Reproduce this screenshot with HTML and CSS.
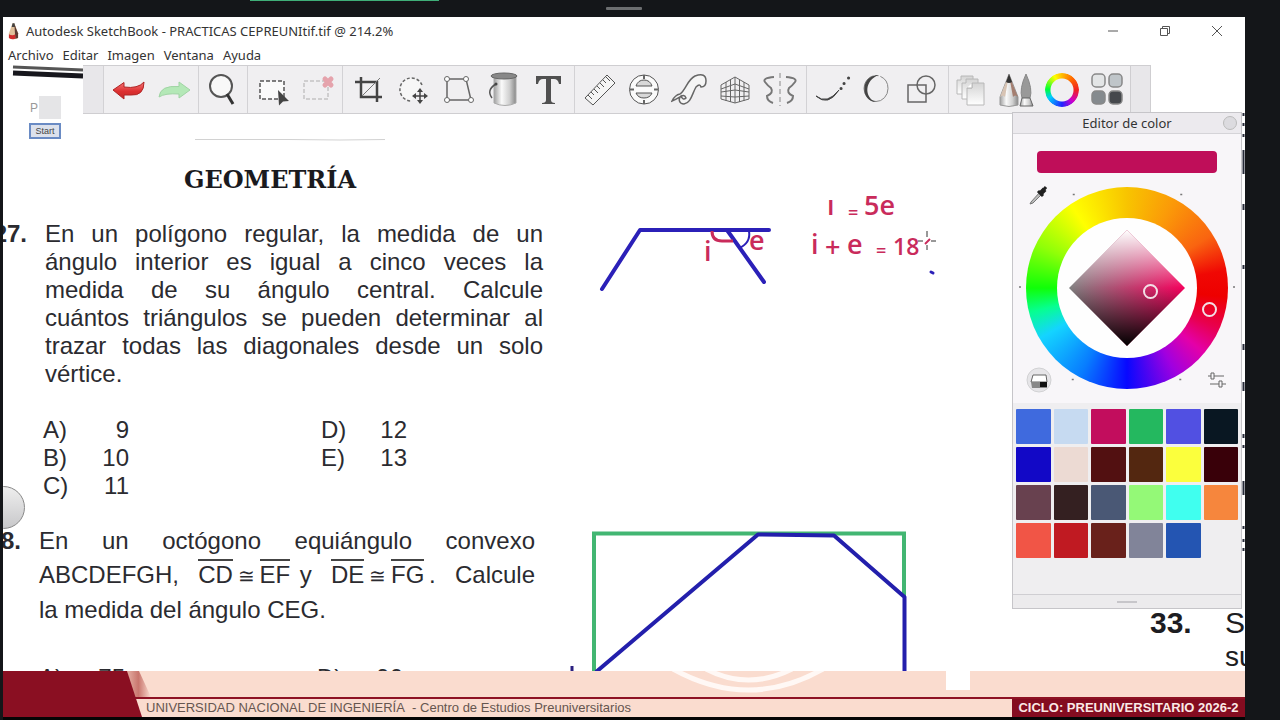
FILE: index.html
```html
<!DOCTYPE html>
<html lang="es">
<head>
<meta charset="utf-8">
<title>Autodesk SketchBook</title>
<link rel="stylesheet" href="styles.css">
</head>
<body>
<svg class="defs" width="0" height="0" aria-hidden="true">
  <defs>
    <linearGradient id="red" x1="0" y1="0" x2="0" y2="1"><stop offset="0" stop-color="#f4787a"/><stop offset=".55" stop-color="#dd2f30"/><stop offset="1" stop-color="#c22a2a"/></linearGradient>
    <linearGradient id="steel" x1="0" y1="0" x2="1" y2="0"><stop offset="0" stop-color="#a0a0a0"/><stop offset=".35" stop-color="#fafafa"/><stop offset=".7" stop-color="#d0d0d0"/><stop offset="1" stop-color="#888"/></linearGradient>
    <linearGradient id="paper" x1="0" y1="0" x2="0" y2="1"><stop offset="0" stop-color="#d4d4d4"/><stop offset="1" stop-color="#ffffff"/></linearGradient>
    <linearGradient id="hue" x1="0" y1="0" x2="1" y2="0"><stop offset="0" stop-color="#808080"/><stop offset="1" stop-color="#f5005c"/></linearGradient>
    <linearGradient id="light" x1="0" y1="0" x2="0" y2="1"><stop offset="0" stop-color="#fff"/><stop offset=".5" stop-color="#fff" stop-opacity="0"/><stop offset=".5" stop-color="#000" stop-opacity="0"/><stop offset="1" stop-color="#000"/></linearGradient>
    <linearGradient id="fold" x1="0" y1="0" x2="1" y2="0"><stop offset="0" stop-color="#efc4b8"/><stop offset=".55" stop-color="#c9766e"/><stop offset="1" stop-color="#fadccf"/></linearGradient>
  </defs>
</svg>
<header class="meeting-bar"><span class="share-line"></span><span class="grabber"></span></header>
<main class="window">
  <div class="titlebar">
    <svg class="app-icon" viewBox="0 0 12 20" aria-hidden="true"><path d="M5 1 1 12v5q5 3 10 0v-5L7 1z" fill="#e0c09a"/><path d="M5 1h2l1 4H4z" fill="#444"/><path d="M7 2l4 10v5l-3 1z" fill="#5a3a32"/><path d="M1 13q4 2 7 0v5q-4 1-7-1z" fill="#d02c2c"/></svg>
    <h1 class="title">Autodesk SketchBook - PRACTICAS CEPREUNItif.tif @ 214.2%</h1>
    <div class="window-controls">
      <button aria-label="Minimizar"><svg viewBox="0 0 12 12"><path d="M1 6h10"/></svg></button>
      <button aria-label="Restaurar"><svg viewBox="0 0 12 12"><path d="M1.500 3.500h7v7h-7zM3.500 3.500v-2h7v7h-2"/></svg></button>
      <button aria-label="Cerrar"><svg viewBox="0 0 12 12"><path d="M1 1l10 10M11 1 1 11"/></svg></button>
    </div>
  </div>
  <nav class="menu">
    <button>Archivo</button><button>Editar</button><button>Imagen</button><button>Ventana</button><button>Ayuda</button>
  </nav>
  <section class="stage">
    <article class="sheet">
      <div class="column">
        <h2 class="heading">GEOMETRÍA</h2>
        <section class="question">
          <span class="number">27.</span>
          <div class="body">
            <p class="lines"><span>En un polígono regular, la medida de un</span><span>ángulo interior es igual a cinco veces la</span><span>medida de su ángulo central. Calcule</span><span>cuántos triángulos se pueden determinar al</span><span>trazar todas las diagonales desde un solo</span><span class="last">vértice.</span></p>
            <div class="options">
              <span>A)</span><span class="value">9</span><span>D)</span><span class="value">12</span>
              <span>B)</span><span class="value">10</span><span>E)</span><span class="value">13</span>
              <span>C)</span><span class="value">11</span>
            </div>
          </div>
        </section>
        <section class="question second">
          <span class="number">28.</span>
          <div class="body">
            <p class="lines loose"><span>En un octógono equiángulo convexo</span><span>ABCDEFGH, <i>CD</i>&#8201;<b>≅</b>&#8201;<i>EF</i>&#8201;&#8201;y <i>DE</i>&#8201;<b>≅</b>&#8201;<i>FG</i>&#8201;. Calcule</span><span class="last">la medida del ángulo CEG.</span></p>
            <div class="options">
              <span>A)</span><span class="value">75</span><span>D)</span><span class="value">90</span>
            </div>
          </div>
        </section>
      </div>
      <div class="next-column"><p><strong>33.</strong><span>S</span></p><p class="under">su</p></div>
      <svg class="ink" width="1242" height="606" viewBox="3 65 1242 606">
        <path d="M13 67 83 70" stroke="#555" stroke-width="3"/><path d="M13 73 83 76" stroke="#17171d" stroke-width="5"/>
        <path d="M195 139.500H290L340 140 385 139.500" fill="none" stroke="#d2d2d2"/>
        <g fill="none" stroke="#2b20b8" stroke-width="4" stroke-linecap="round" stroke-linejoin="round">
          <path d="M602 289 640 230H769M727 230l37 52"/><path d="M749 231q2 12-10 17" stroke-width="2"/>
          <path d="M931 272l2 1" stroke-width="3"/>
        </g>
        <path d="M712 231q0 10 10 10h11" fill="none" stroke="#c92b5b" stroke-width="3"/>
        <g class="notes">
          <text x="704" y="261">i</text><text x="749" y="250">e</text>
          <text x="827" y="215">ı</text><text x="848" y="219" class="equal">=</text><text x="864" y="215">5e</text>
          <text x="811" y="254">i</text><text x="825" y="257">+</text><text x="847" y="254">e</text><text x="876" y="257" class="equal">=</text><text x="893" y="255" class="digits">18</text>
        </g>
        <path d="M925 244l5-5" stroke="#c92b5b" stroke-width="2"/>
        <path d="M927 231v6m0 8v5M918 241h5m8 0h5" stroke="#333" fill="none"/>
        <path d="M594 672V533.500H904V596" fill="none" stroke="#42b672" stroke-width="4"/>
        <path d="M596 672 758 534.500 834 535.500 904.500 597V672" fill="none" stroke="#231fac" stroke-width="4" stroke-linejoin="round"/>
        <path d="M572 666v6" stroke="#2b2080" stroke-width="3"/>
        <path d="M1243.500 113v3m0 7v3m0 8v3m0 13v24m0 30v6m0 55v4m0 75v6m0 32v9m0 43v4m0 7v3m0 33v14m0 31v3m0 10v3m0 6v3" stroke="#262a38" stroke-width="2"/>
      </svg>
    </article>

    <div class="toolbar" role="toolbar" aria-label="Herramientas">
      <span class="handle"></span>
      <div class="group two">
        <button aria-label="Deshacer"><svg viewBox="0 0 40 40"><path d="M4 20 15 12.500V17q14 2 20-5 0 14-13 13h-7v4z" fill="url(#red)" stroke="#b02424"/></svg></button>
        <button aria-label="Rehacer"><svg viewBox="0 0 40 40"><path d="M36 20 25 12v4.500Q6 15 5 27q6-4 20-3v4z" fill="#b4e8b7" stroke="#a0d4a4"/></svg></button>
      </div>
      <div class="group one">
        <button aria-label="Zoom"><svg viewBox="0 0 40 40"><circle cx="18" cy="16" r="11" fill="#f8f8f8" stroke="#555" stroke-width="2"/><path d="M24 24l6 10" stroke="#333" stroke-width="3"/></svg></button>
      </div>
      <div class="group two">
        <button aria-label="Seleccionar"><svg viewBox="0 0 40 40"><path d="M7 11h24v18H7z" fill="#fafafa" stroke="#555" stroke-width="1.500" stroke-dasharray="4 2"/><path d="M25 20l11 11-6 .500-4 4z" fill="#444"/></svg></button>
        <button aria-label="Deseleccionar"><svg viewBox="0 0 40 40"><path d="M6 11h24v18H6z" fill="none" stroke="#c4c4c4" stroke-width="1.500" stroke-dasharray="4 2"/><path d="M27 9l6 6m0-6-6 6" stroke="#e5a3ac" stroke-width="5" stroke-linecap="round"/></svg></button>
      </div>
      <div class="group five">
        <button aria-label="Recortar"><svg viewBox="0 0 40 40"><path d="M6 12h22v20M12 7v20h21" fill="none" stroke="#444" stroke-width="2.500"/><path d="M13 26 31 8" stroke="#777"/></svg></button>
        <button aria-label="Transformar"><svg viewBox="0 0 40 40"><path d="M28 15A11.500 11.500 0 1 0 17 31" fill="#f7f7f7" stroke="#666" stroke-width="1.500" stroke-dasharray="3 2"/><path d="M26 20v12M20 26h12" stroke="#444" stroke-width="1.500"/><path d="M26 18l3 4h-6zM26 34l3-4h-6zM18 26l4-3v6zM34 26l-4-3v6z" fill="#444"/></svg></button>
        <button aria-label="Distorsionar"><svg viewBox="0 0 40 40"><path d="M8 9h19l5 21H8z" fill="none" stroke="#666" stroke-width="1.500"/><g fill="#fff" stroke="#666"><circle cx="8" cy="9" r="2.500"/><circle cx="27" cy="9" r="2.500"/><circle cx="32" cy="30" r="2.500"/><circle cx="8" cy="30" r="2.500"/></g></svg></button>
        <button aria-label="Relleno"><svg viewBox="0 0 40 40"><path d="M10 6v27q11 5 22 0V6z" fill="url(#steel)" stroke="#aaa"/><ellipse cx="20" cy="6" rx="13" ry="3" fill="#888" stroke="#666"/><path d="M12 14q-10 6-4 14" fill="none" stroke="#555" stroke-width="1.500"/><circle cx="12" cy="14" r="1.500" fill="#444"/></svg></button>
        <button aria-label="Texto"><svg viewBox="0 0 40 40"><path d="M7 6h25v8h-2q-1-5-5-5h-3v21q0 3 4 3v1H13v-1q4 0 4-3V9h-3q-4 0-5 5H7z" fill="#505050"/></svg></button>
      </div>
      <div class="group five">
        <button aria-label="Regla"><svg viewBox="0 0 40 40"><path d="M4 28 26 5l8 8-22 22z" fill="#f5f5f5" stroke="#555"/><path d="M7 25l4 4m-1-7 3 3m0-6 4 4m-1-7 3 3m0-6 4 4m-1-7 3 3m0-6 4 4" stroke="#555"/></svg></button>
        <button aria-label="Elipse"><svg viewBox="0 0 40 40"><circle cx="18" cy="19.500" r="14.500" fill="#fafafa" stroke="#555"/><path d="M10 16q2-6 8-6t8 6zM10 23q2 5 8 5t8-5z" fill="#d8d8d8" stroke="#555"/><path d="M18 5v4m0 21v4M4 19.500h4m20 0h4" stroke="#666" stroke-width="2"/></svg></button>
        <button aria-label="Curva francesa"><svg viewBox="0 0 40 40"><path d="M1 31Q4 25 9 24C15 20 16 10 24 6Q35 2 35 11q0 6-5 6-1-4-5 0c-4 7-5 16-12 17-5 0-6-5-3-8 1 3 3 4 5 2-2-6-6 0-14 3z" fill="#f5f5f5" stroke="#666" stroke-width="1.500"/></svg></button>
        <button aria-label="Perspectiva"><svg viewBox="0 0 40 40"><path d="M5 15 19 7l14 8v14l-14 4-14-4zM19 7v26M10 12v19M14.500 10v22M28 12v19M23.500 10v22M5 19l14-5 14 5M5 22l14-2 14 2M5 26l14 1 14-1" fill="none" stroke="#666"/></svg></button>
        <button aria-label="Simetría"><svg viewBox="0 0 40 40"><path d="M13 7Q1 8 4 12t6 6q3 5-4 8 0 5 6 7M25 7q12 1 9 5t-6 6q-3 5 4 8 0 5-6 7" fill="none" stroke="#777" stroke-width="2"/><path d="M19 3v33" stroke="#888" stroke-dasharray="5 3"/></svg></button>
      </div>
      <div class="group three">
        <button aria-label="Trazo predictivo"><svg viewBox="0 0 40 40"><path d="M3 26q11 9 23-6-11 17-23 6z" fill="#444" stroke="#444"/><path d="M28 18.500h.1M31 13.500h.1M35.500 8h.1" stroke="#444" stroke-width="3" stroke-linecap="round"/></svg></button>
        <button aria-label="Trazo de elipse"><svg viewBox="0 0 40 40"><ellipse cx="18" cy="18.500" rx="12" ry="13" fill="none" stroke="#888" stroke-dasharray="56 2 3 2"/><path d="M21 5C1 5 3 32 18 32 6 28 6 10 21 5z" fill="#444"/></svg></button>
        <button aria-label="Formas"><svg viewBox="0 0 40 40"><path d="M5 15h18v17H5z" fill="none" stroke="#666" stroke-width="1.500"/><circle cx="23" cy="15" r="9" fill="none" stroke="#666" stroke-width="1.500"/></svg></button>
      </div>
      <div class="group four">
        <button aria-label="Capas"><svg viewBox="0 0 40 40"><g fill="url(#paper)" stroke="#b8b8b8"><path d="M9 6h12v18H5V10h4z"/><path d="M14 9h12v20H10V13h4z"/><path d="M20 13h12v22H15V18h5z"/><path d="M15 18h5v-5" fill="#fff"/></g></svg></button>
        <button aria-label="Pinceles"><svg viewBox="0 0 40 40"><path d="M12 4 3 27v8q9 3 18 0v-8z" fill="url(#steel)" stroke="#999"/><path d="M12 5 7 17 3 27q3-3 5 0z" fill="#d8c4b4"/><path d="M12 5l4 10 5 12q-3-3-5 0z" fill="#a57e70"/><path d="M12 4l-3 8q3 2 6 0z" fill="#333"/><path d="M29 4q-7 15-4 24h8q3-9-4-24z" fill="#999" stroke="#888"/><path d="M25 28h8l3 8H23z" fill="url(#steel)" stroke="#666"/></svg></button>
        <button aria-label="Editor de color"><span class="mini-wheel"></span></button>
        <button aria-label="Biblioteca de colores"><svg viewBox="0 0 40 40"><g stroke="#888" stroke-width="1.500"><rect x="5" y="4" width="13" height="13" rx="4" fill="#e3e5e6"/><rect x="22" y="4" width="13" height="13" rx="4" fill="#bfc5c9"/><rect x="5" y="21" width="13" height="13" rx="4" fill="#858a8e"/><rect x="22" y="21" width="13" height="13" rx="4" fill="#45484c"/></g></svg></button>
      </div>
      <span class="handle end"></span>
    </div>

    <div class="launcher"><span class="letter">P</span><span class="thumb"></span><button class="start">Start</button></div>
    <button class="puck" aria-label="Controlador de pincel"></button>

    <aside class="panel">
      <header class="panel-head"><h2>Editor de color</h2><button class="close" aria-label="Cerrar panel"></button></header>
      <div class="picker">
        <div class="current"></div>
        <div class="wheel-area">
          <div class="wheel">
            <div class="hole"><svg class="diamond" viewBox="0 0 116 116"><path d="M58 0l58 58-58 58L0 58z" fill="url(#hue)"/><path d="M58 0l58 58-58 58L0 58z" fill="url(#light)"/></svg></div>
            <span class="ring hue-ring"></span><span class="ring tone-ring"></span>
          </div>
          <svg class="ticks" viewBox="0 0 229 230"><path d="M60 21h2M168 21h2M6 114h2M221 114h2M59 207h2M167 207h2" stroke="#777" stroke-width="1.500"/></svg>
          <button class="tool dropper" aria-label="Cuentagotas"><svg viewBox="0 0 24 24"><path d="M4 20 13 10l2 2-9 9-3 1z" fill="#bbb" stroke="#777"/><path d="M11 9l5 5M14 11l5-6" stroke="#222" stroke-width="3"/><path d="M13 10l3-3 2 2-3 3z" fill="#222" stroke="#222" stroke-width="2"/></svg></button>
          <button class="tool mode" aria-label="Transparencia"><svg viewBox="0 0 26 26"><circle cx="13" cy="13" r="12" fill="#e6e5e8" stroke="#d2d2d4"/><path d="M7 8h13l1 7H5z" fill="#fff" stroke="#666"/><path d="M5 15h16v6H6z" fill="#888"/><path d="M14 15h7v5h-7z" fill="#111"/></svg></button>
          <button class="tool adjust" aria-label="Ajustes"><svg viewBox="0 0 20 20"><path d="M1 6h3m3 0h10M3 14h9m3 0h4M4 3h3v6H4zM12 11h3v6h-3z" fill="none" stroke="#666"/></svg></button>
        </div>
      </div>
      <div class="swatches">
        <button class="c1" aria-label="Azul"></button><button class="c2" aria-label="Celeste"></button><button class="c3" aria-label="Magenta"></button><button class="c4" aria-label="Verde"></button><button class="c5" aria-label="Violeta"></button><button class="c6" aria-label="Noche"></button>
        <button class="c7" aria-label="Azul intenso"></button><button class="c8" aria-label="Rosa pálido"></button><button class="c9" aria-label="Granate"></button><button class="c10" aria-label="Marrón"></button><button class="c11" aria-label="Amarillo"></button><button class="c12" aria-label="Vino"></button>
        <button class="c13" aria-label="Malva"></button><button class="c14" aria-label="Café"></button><button class="c15" aria-label="Pizarra"></button><button class="c16" aria-label="Verde claro"></button><button class="c17" aria-label="Turquesa"></button><button class="c18" aria-label="Naranja"></button>
        <button class="c19" aria-label="Coral"></button><button class="c20" aria-label="Rojo"></button><button class="c21" aria-label="Teja"></button><button class="c22" aria-label="Gris"></button><button class="c23" aria-label="Azul medio"></button>
      </div>
      <div class="panel-grip"><span></span></div>
    </aside>
  </section>
  <footer class="banner">
    <svg class="emblem" viewBox="570 671 420 26" width="420" height="26" aria-hidden="true"><path d="M673 669q76 42 150 0M706 669q42 22 86 0" fill="none" stroke="#fff8f5" stroke-width="5"/><path d="M946 671h24v19h-24z" fill="#fff"/></svg>
    <div class="strip"><p class="school">UNIVERSIDAD NACIONAL DE INGENIERÍA&nbsp; - Centro de Estudios Preuniversitarios</p><p class="cycle">CICLO: PREUNIVERSITARIO 2026-2</p></div>
    <svg class="corner" viewBox="0 0 156 46" width="156" height="46" aria-hidden="true"><path d="M120 0h16l12 26h-18z" fill="url(#fold)"/><path d="M0 0h115l18 46H0z" fill="#8a0f22" transform="translate(0 0)"/><path d="M0 0h124l15 46H0z" fill="#8a0f22"/></svg>
  </footer>
</main>
</body>
</html>
```
FILE: styles.css
```css
* { box-sizing: border-box; }
body {
  margin: 0;
  height: 100vh;
  display: flex;
  flex-direction: column;
  overflow: hidden;
  background: #141619;
  font-family: "Open Sans", "Noto Sans", sans-serif;
  color: #333;
}
button { padding: 0; border: 0; background: none; font: inherit; color: inherit; }
h1, h2, p { margin: 0; font-weight: normal; }
svg { display: block; }
.defs { position: absolute; }

.meeting-bar { height: 17px; flex: none; position: relative; display: flex; justify-content: center; align-items: center; }
.share-line { position: absolute; top: 0; left: 250px; width: 189px; height: 1px; background: #3fae78; }
.grabber { width: 36px; height: 3px; margin-right: 32px; border-radius: 1px; background: #6c6e70; }

.window { flex: 1; min-height: 0; margin: 0 35px 0 3px; display: flex; flex-direction: column; background: #fff; border-bottom: 3px solid #050505; }
.titlebar { flex: none; height: 28px; display: flex; align-items: center; padding-left: 5px; gap: 7px; }
.app-icon { width: 11px; height: 19px; }
.title { flex: 1; font-family: "Noto Sans", sans-serif; font-size: 13px; line-height: 18px; }
.window-controls { display: flex; padding-right: 2px; }
.window-controls button { width: 52px; height: 26px; display: grid; place-items: center; }
.window-controls svg { width: 12px; height: 12px; fill: none; stroke: #555; }
.menu { flex: none; height: 20px; display: flex; align-items: center; gap: 9px; padding-left: 5px; }
.menu button { font-family: "Noto Sans", sans-serif; font-size: 13px; line-height: 18px; }

.stage { flex: 1; min-height: 0; position: relative; overflow: hidden; }
.sheet { position: relative; display: flex; justify-content: space-between; height: 100%; overflow: hidden; font-family: "Liberation Sans", Arial, sans-serif; font-size: 24px; line-height: 28px; color: #2b2b30; }
.column { width: 540px; padding-top: 99px; }
.heading { margin: 0 6px 24px 0; font-family: "DejaVu Serif", serif; font-weight: bold; font-size: 24px; line-height: 32px; text-align: center; color: #1a1a1e; }
.question { display: flex; gap: 18px; }
.number { flex: none; width: 24px; display: flex; justify-content: flex-end; font-weight: bold; }
.body { flex: 1; }
.second { margin: 24px 8px 0 0; }
.second .number { width: 18px; line-height: 34px; }
.lines span { display: block; text-align: justify; text-align-last: justify; white-space: nowrap; }
.lines .last { text-align-last: left; }
.loose { line-height: 34px; }
.loose i { font-style: normal; border-top: 2px solid #444; }
.loose b { font-weight: normal; font-size: 20px; }
.options { display: grid; grid-template-columns: 46px 232px 46px 40px; justify-content: start; margin: 28px 0 0 -2px; }
.value { width: 40px; text-align: right; }
.second .options { margin: 37px 0 0; }
.next-column { width: 95px; align-self: flex-end; font-size: 30px; line-height: 34px; color: #1d1d22; white-space: nowrap; }
.next-column p { display: flex; justify-content: space-between; }
.next-column span { width: 20px; }
.next-column .under { height: 31px; padding-left: 75px; font-size: 28px; }
.ink { position: absolute; top: 0; left: 0; }
.notes { font-family: "Open Sans", sans-serif; font-size: 27px; font-weight: 600; fill: #c92b5b; }
.notes .equal { font-size: 18px; }
.notes .digits { font-size: 23px; }

.toolbar { position: absolute; top: 0; left: 80px; height: 49px; display: flex; background: #f0eff1; border: 1px solid #cfced1; border-left: 0; }
.handle { width: 20px; background: #e8e7ea; }
.handle.end { border-left: 1px solid #cfced1; }
.group { display: flex; justify-content: center; border-left: 1px solid #d3d2d5; }
.one { width: 49px; }
.two { width: 95px; }
.three { width: 142px; }
.four { width: 182px; }
.five { width: 232px; }
.group button { width: 45px; display: grid; place-items: center; }
.group svg { width: 40px; height: 40px; }
.mini-wheel { width: 34px; height: 34px; border-radius: 50%; background: conic-gradient(#fb0, #f60 12%, #f02020 25%, #c0c 38%, #22f 50%, #0cf 66%, #0f3 76%, #ff0 92%, #fb0); -webkit-mask: radial-gradient(circle, transparent 11px, #000 12px); mask: radial-gradient(circle, transparent 11px, #000 12px); }

.launcher { position: absolute; left: 26px; top: 31px; width: 32px; display: flex; flex-wrap: wrap; align-items: center; justify-content: space-between; row-gap: 4px; font-family: "Liberation Sans", Arial, sans-serif; }
.letter { padding-left: 1px; font-size: 12px; color: #999; }
.thumb { width: 22px; height: 23px; background: #e5e5e7; }
.start { width: 32px; height: 16px; font-size: 9px; line-height: 12px; background: #dce1ec; border: 2px solid #6a8bc4; color: #444; }
.puck { position: absolute; left: -21px; bottom: 142px; width: 43px; height: 43px; border-radius: 50%; border: 1px solid #888; background: linear-gradient(#eee, #c8c8ca); }

.panel { position: absolute; top: 47px; right: 3px; width: 230px; background: #f8f6f9; border: 1px solid #c6c5c9; }
.panel-head { position: relative; height: 21px; display: flex; align-items: center; justify-content: center; background: #eceaee; border-bottom: 1px solid #d5d4d8; }
.panel-head h2 { font-family: "Noto Sans", sans-serif; font-size: 13px; line-height: 18px; }
.close { position: absolute; right: 4px; width: 14px; height: 14px; border-radius: 50%; background: #dcdbdf; border: 1px solid #bbb; }
.picker { padding-top: 17px; }
.current { height: 22px; margin: 0 24px; border-radius: 4px; background: #bf0e59; }
.wheel-area { position: relative; height: 230px; display: grid; place-items: center; }
.wheel { position: relative; width: 202px; height: 202px; border-radius: 50%; display: grid; place-items: center; background: conic-gradient(#f8c400 0deg, #fb9a08 28deg, #f96410 58deg, #f00804 80deg, #ee0000 95deg, #e8004e 114deg, #e400a8 130deg, #a000e0 150deg, #0808ff 180deg, #087cff 208deg, #14d4ff 240deg, #06ff90 256deg, #10ff08 270deg, #90ff08 296deg, #ffff00 326deg, #f8c400 360deg); }
.hole { width: 140px; height: 140px; border-radius: 50%; background: #fefefe; display: grid; place-items: center; }
.diamond { width: 116px; height: 116px; }
.ring { position: absolute; width: 15px; height: 15px; border: 2px solid #f3dfe6; border-radius: 50%; }
.hue-ring { left: 176px; top: 115px; }
.tone-ring { left: 117px; top: 97px; }
.ticks { position: absolute; top: 0; left: 0; width: 100%; height: 230px; }
.tool { position: absolute; }
.dropper { left: 14px; top: 9px; width: 24px; }
.mode { left: 13px; bottom: 10px; width: 26px; }
.adjust { right: 14px; bottom: 13px; width: 20px; }
.swatches { display: grid; grid-template-columns: repeat(6, 1fr); grid-auto-rows: 35px; gap: 3px; padding: 6px 3px 36px; background: #efeef0; }
.swatches button { border-radius: 1px; }
.panel-grip { height: 14px; display: grid; place-items: center; background: #ecebed; border-top: 1px solid #cfced2; }
.panel-grip span { width: 20px; height: 2px; background: #c7c6ca; }
.c1 { background: #3f6ade; } .c2 { background: #c6daf1; } .c3 { background: #c20d5d; } .c4 { background: #24b85f; } .c5 { background: #5150e2; } .c6 { background: #091722; }
.c7 { background: #1208c6; } .c8 { background: #ecdad3; } .c9 { background: #521011; } .c10 { background: #532710; } .c11 { background: #fbff3d; } .c12 { background: #390009; }
.c13 { background: #68414f; } .c14 { background: #342021; } .c15 { background: #4a5875; } .c16 { background: #94f977; } .c17 { background: #40ffef; } .c18 { background: #f6863d; }
.c19 { background: #f15546; } .c20 { background: #c01a22; } .c21 { background: #69211b; } .c22 { background: #818499; } .c23 { background: #2455b2; }

.banner { flex: none; position: relative; padding-top: 26px; background: #fadccf; font-family: "Liberation Sans", Arial, sans-serif; }
.emblem { position: absolute; top: 0; left: 567px; }
.corner { position: absolute; top: 0; left: 0; }
.strip { display: flex; height: 20px; border-top: 2px solid #8e1224; line-height: 18px; font-size: 13px; }
.school { flex: 1; padding-left: 143px; color: #66564f; }
.cycle { width: 233px; background: #840c20; color: #fbe9e6; font-weight: bold; text-align: center; }
```
